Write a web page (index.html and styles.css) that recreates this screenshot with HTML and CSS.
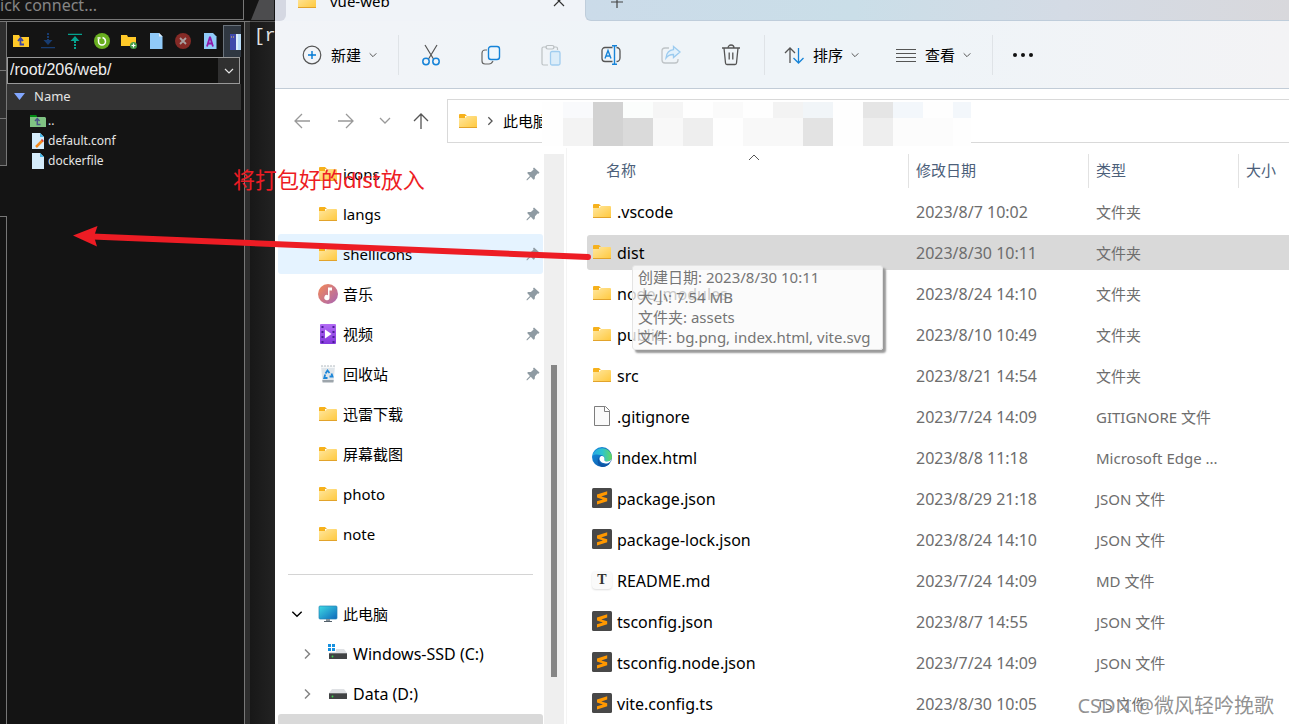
FILE: index.html
```html
<!DOCTYPE html>
<html lang="zh-CN">
<head>
<meta charset="utf-8">
<title>vue-web</title>
<link rel="stylesheet" href="styles.css">
</head>
<body>
<svg class="defs" aria-hidden="true">
  <defs>
    <linearGradient id="gFolder" x1="0" y1="0" x2="1" y2="1"><stop offset="0" stop-color="#ffe7a0"/><stop offset="1" stop-color="#ffc83c"/></linearGradient>
    <linearGradient id="gMusic" x1="0" y1="0" x2="1" y2="1"><stop offset="0" stop-color="#f58a55"/><stop offset="1" stop-color="#a765b5"/></linearGradient>
    <linearGradient id="gVideo" x1="0" y1="0" x2="0" y2="1"><stop offset="0" stop-color="#b36bf5"/><stop offset="1" stop-color="#8338dc"/></linearGradient>
    <linearGradient id="gPc" x1="0" y1="0" x2="1" y2="1"><stop offset="0" stop-color="#3fdbe4"/><stop offset="1" stop-color="#0d67bb"/></linearGradient>
    <linearGradient id="gEdgeTop" x1="0" y1="0" x2="1" y2="0"><stop offset="0" stop-color="#28a9e4"/><stop offset=".5" stop-color="#2dc3cf"/><stop offset="1" stop-color="#66d85c"/></linearGradient>
    <linearGradient id="gEdgeLow" x1="0" y1="0" x2="1" y2="1"><stop offset="0" stop-color="#1793e2"/><stop offset="1" stop-color="#0c4fa0"/></linearGradient>
  </defs>
  <symbol id="folder" viewBox="0 0 20 20"><path d="M1 4a1 1 0 0 1 1-1h5l2 2h-2v3H1z" fill="#f6b11c"/><path d="M1 7h6l2-2h9a1 1 0 0 1 1 1v11H1z" fill="url(#gFolder)"/><path d="M1 16h18v1H1z" fill="#e2a32b"/></symbol>
  <symbol id="pin" viewBox="0 0 14 14"><path d="M8 .5 13.500 5.500 12.500 6.800 11.500 6.500 9 9.300 8.700 12 7.500 12.700 4.800 9.800 1.300 13.300.5 13.300.7 12.200 3.900 8.900 1.200 6.100 2 4.900 4.900 4.900 7.600 2.500 7 1.400z" fill="#8f9ba3"/></symbol>
  <symbol id="music" viewBox="0 0 20 20"><circle cx="10" cy="10" r="10" fill="url(#gMusic)"/><path d="M10 3.500h4v3h-2.500v7A2.600 2.600 0 1 1 10 11.200z" fill="#fff"/></symbol>
  <symbol id="video" viewBox="0 0 20 20"><rect x="2" width="16" height="20" rx="1" fill="url(#gVideo)"/><path d="M4.500 2v17M15.500 2v17" stroke="#4a1d96" stroke-width="2" stroke-dasharray="2 3"/><path d="M7 5.500 13.500 10 7 14.500z" fill="#fff"/></symbol>
  <symbol id="bin" viewBox="0 0 20 20"><path d="M3 2h14l-1.500 16h-11z" fill="#dfe5ea"/><path d="M3 2h14l-.3 2H3.300z" fill="#f6f8f9"/><path d="M3 2h14" stroke="#b4bbc1" stroke-dasharray="2 1"/><path d="M4.300 16h11.400l-.3 2.500H4.600z" fill="#9da5ab"/><path d="m7.500 9.500 2-3 2 2.500M13.500 9.500l1 3h-3M9.500 14H6.200l1-3.500" fill="none" stroke="#1c86d8" stroke-width="1.800"/></symbol>
  <symbol id="pc" viewBox="0 0 20 20"><rect x="1" y="2" width="18" height="13" rx="1" fill="url(#gPc)" stroke="#2684b4" stroke-width=".7"/><path d="M8 15h4v2H8z" fill="#85919a"/><path d="M6 17h8v1H6z" fill="#53606a"/></symbol>
  <symbol id="drive" viewBox="0 0 20 20"><path d="M4 5h12l3 4H1z" fill="#dfe1e4"/><rect x="1" y="9" width="18" height="6" rx=".6" fill="#414344"/><path d="M1 9.500h18" stroke="#707274"/><circle cx="4.500" cy="12.500" r=".9" fill="#3ad84b"/></symbol>
  <symbol id="windrive" viewBox="0 0 20 20"><path d="M6 5h10l3 4H1z" fill="#dfe1e4"/><rect x="1" y="9" width="18" height="6" rx=".6" fill="#414344"/><path d="M1 9.500h18" stroke="#707274"/><circle cx="4.500" cy="12.500" r=".9" fill="#3ad84b"/><path d="M-1-1h9v9h-9z" fill="#fff"/><path d="M0 0h3v3H0zM4 0h3v3H4zM0 4h3v3H0zM4 4h3v3H4z" fill="#1590df"/></symbol>
  <symbol id="page" viewBox="0 0 20 20"><path d="M2.500.5h11l4 4v15h-15z" fill="#fafafa" stroke="#7d7d7d"/><path d="M12.500.5v5h5" fill="#fff" stroke="#7d7d7d"/></symbol>
  <symbol id="edge" viewBox="0 0 20 20"><circle cx="10" cy="10" r="10" fill="url(#gEdgeLow)"/><path d="M.3 9A10 10 0 0 1 20 10c.1 3-2.200 4.600-5 4.600-2 0-3-1-2.600-2.200.7-2-.6-4.200-3.400-4.500C5.500 7.400 2.500 6.900.3 9z" fill="url(#gEdgeTop)"/><path d="M7.500 9.500c-1.500 3-.3 6.300 2.500 7.500 2.800 1.200 6.500.5 8.500-1.500a10 10 0 0 1-8 4.500C6 19.500 4 13 7.500 9.500z" fill="#0c55a6"/><path d="M8.500 9.500c2-1.500 4.600.5 3.900 2.900-.4 1.400 1 2.200 2.600 2.200 1.800 0 3.600-.7 4.300-2-.4 1.800-1.400 2.800-2.800 3.300-4 1.500-8.700-.4-9-3.900 0-1 .3-2 1-2.500z" fill="#fff"/></symbol>
  <symbol id="sublime" viewBox="0 0 20 20"><rect width="20" height="20" rx="1.500" fill="#484848"/><path d="M15.200 3.300v3.200L9.300 8.400l5.900 1.800v3L5 16.500v-3.200l5.900-1.900L5 9.600V6.600z" fill="#ff9800"/></symbol>
  <symbol id="chev" viewBox="0 0 12 12"><path d="m2 4 4 4 4-4" fill="none" stroke="currentColor" stroke-width="1.200"/></symbol>
  <symbol id="chevr" viewBox="0 0 12 12"><path d="m4 1.500 4.500 4.500L4 10.500" fill="none" stroke="currentColor" stroke-width="1.500"/></symbol>
</svg>

<div class="desktop">
  <aside class="term">
    <div class="quick"><span class="quick-text">ick connect...</span></div>
    <div class="shell-tabs"><svg width="30" height="21" viewBox="0 0 30 21"><path d="M7 20 15 0h15v20z" fill="#4c4c4e"/></svg></div>
    <div class="rail"><i class="rail-a"></i><i class="rail-gap"></i><i class="rail-b"></i></div>
    <section class="sftp">
      <div class="sftp-tools">
        <button type="button" aria-label="上级目录"><svg width="16" height="16" viewBox="0 0 16 16"><path d="M0 2h6l1 2h9v10H0z" fill="#ffc928"/><path d="m5 8 2.500-3L10 8M7.500 6v5.500H11" fill="none" stroke="#3b45a5" stroke-width="1.800"/></svg></button>
        <button type="button" aria-label="下载"><svg width="16" height="16" viewBox="0 0 16 16"><path d="M8 0v8" stroke="#183c70" stroke-width="2" stroke-dasharray="2 1"/><path d="M3.500 7h9L8 12zM1 14h14v1.300H1z" fill="#183c70"/></svg></button>
        <button type="button" aria-label="上传"><svg width="16" height="16" viewBox="0 0 16 16"><path d="M1 .7h14V2H1zM3.500 8h9L8 3z" fill="#05a28f"/><path d="M8 8v8" stroke="#05a28f" stroke-width="2" stroke-dasharray="2 1"/></svg></button>
        <button type="button" aria-label="刷新"><svg width="16" height="16" viewBox="0 0 16 16"><circle cx="8" cy="8" r="8" fill="#69ae20"/><path d="M4.500 6v2.500a3.500 3.500 0 0 0 7 0C11.500 6 10 5 8.500 4.500M3.500 5h3" fill="none" stroke="#fff" stroke-width="1.500"/></svg></button>
        <button type="button" aria-label="新建文件夹"><svg width="16" height="16" viewBox="0 0 16 16"><path d="M0 2h6l1 2h8v9H0z" fill="#ffc928"/><circle cx="12.500" cy="12.500" r="3.500" fill="#459f4a"/><path d="M12.500 10.500v4M10.500 12.500h4" stroke="#fff" stroke-width="1.200"/></svg></button>
        <button type="button" aria-label="新建文件"><svg width="16" height="16" viewBox="0 0 16 16"><path d="M2 0h9l3.500 3.500V16H2z" fill="#90caf9"/><path d="M11 0v3.500h3.500z" fill="#e3f2fd"/></svg></button>
        <button type="button" aria-label="删除"><svg width="16" height="16" viewBox="0 0 16 16"><circle cx="8" cy="8" r="8" fill="#842a26"/><path d="m5 5 6 6m0-6-6 6" stroke="#a9a0a0" stroke-width="1.800"/></svg></button>
        <button type="button" aria-label="重命名"><svg width="16" height="16" viewBox="0 0 16 16"><path d="M2 0h9l3.500 3.500V16H2z" fill="#90caf9"/><path d="m5 13.500 2.800-9h.4l2.800 9M6 10.500h4" fill="none" stroke="#9019a8" stroke-width="1.800"/></svg></button>
        <button type="button" class="pressed" aria-label="分栏"><svg width="11" height="16" viewBox="0 0 11 16"><path d="M0 0h6v16H0z" fill="#3f49ab"/><path d="M6 0h5v16H6z" fill="#b9ddfb"/><path d="M7 0v16" stroke="#fff"/><path d="M1 3h4" stroke="#f0c95b" stroke-dasharray="1 1"/></svg></button>
      </div>
      <div class="path">
        <input type="text" value="/root/206/web/" aria-label="路径">
        <button type="button" aria-label="展开路径"><svg width="12" height="12"><use href="#chev"/></svg></button>
      </div>
      <div class="sftp-head"><svg width="11" height="7" viewBox="0 0 11 7"><path d="M0 0h11L5.500 7z" fill="#82a7ff"/></svg><span>Name</span></div>
      <ul class="sftp-list">
        <li><svg width="16" height="16" viewBox="0 0 16 16"><path d="M0 2h6l1 1v3H0z" fill="#008a12"/><path d="M0 4h15l1 1v9H0z" fill="#7fc383"/><path d="m5 8 2.300-2.500L9.600 8M7.300 6v5.500h3.200" fill="none" stroke="#4a5486" stroke-width="1.500"/></svg><span>..</span></li>
        <li><svg width="16" height="16" viewBox="0 0 16 16"><path d="M2 0h8l4 4v12H2z" fill="#d5ecfb"/><path d="M10 0v4h4z" fill="#48b9ea"/><path d="m6 14 6.500-6.500" stroke="#f58b1f" stroke-width="2.500"/><path d="m12 8 1-1" stroke="#d4373d" stroke-width="2.500"/></svg><span>default.conf</span></li>
        <li><svg width="16" height="16" viewBox="0 0 16 16"><path d="M2 0h8l4 4v12H2z" fill="#d5ecfb"/><path d="M10 0v4h4z" fill="#48b9ea"/></svg><span>dockerfile</span></li>
      </ul>
    </section>
    <div class="splitter"></div>
    <pre class="console">[r</pre>
  </aside>

  <main class="explorer">
    <header class="tabs">
      <div class="tab-left"></div>
      <div class="tab"><svg width="20" height="20"><use href="#folder"/></svg><span>vue-web</span>
        <button type="button" aria-label="关闭标签页"><svg width="12" height="12" viewBox="0 0 12 12"><path d="m1 1 10 10m0-10L1 11" stroke="#333" stroke-width="1.200"/></svg></button></div>
      <div class="tab-rest"><button type="button" aria-label="新建标签页"><svg width="12" height="12" viewBox="0 0 12 12"><path d="M6 0v12M0 6h12" stroke="#444" stroke-width="1.200"/></svg></button></div>
    </header>

    <div class="toolbar">
      <button type="button" class="cmd cmd-new"><svg width="20" height="20" viewBox="0 0 20 20"><circle cx="10" cy="10" r="8.800" fill="none" stroke="#555" stroke-width="1.200"/><path d="M10 6v8M6 10h8" stroke="#0078d4" stroke-width="1.400"/></svg><span>新建</span><svg class="caret" width="10" height="10"><use href="#chev"/></svg></button>
      <div class="tools">
        <button type="button" aria-label="剪切"><svg width="20" height="22" viewBox="0 0 20 22"><path d="m4 1 8.500 14M16 1 7.500 15" stroke="#555" stroke-width="1.200"/><circle cx="5" cy="17.500" r="3.200" fill="none" stroke="#1683d8" stroke-width="1.500"/><circle cx="15" cy="17.500" r="3.200" fill="none" stroke="#1683d8" stroke-width="1.500"/></svg></button>
        <button type="button" aria-label="复制"><svg width="20" height="20" viewBox="0 0 20 20"><path d="M6 5H4a3 3 0 0 0-3 3v8a3 3 0 0 0 3 3h4c2 0 3-1 4-3" fill="none" stroke="#666" stroke-width="1.200"/><rect x="7.500" y="1.500" width="11" height="13" rx="2.500" fill="#f0f6fb" stroke="#1683d8" stroke-width="1.400"/></svg></button>
        <button type="button" aria-label="粘贴" disabled><svg width="20" height="22" viewBox="0 0 20 22"><path d="M6 3H2.500A1.500 1.500 0 0 0 1 4.500v15A1.500 1.500 0 0 0 2.500 21H7M12 3h3a1.500 1.500 0 0 1 1.500 1.500V6" fill="none" stroke="#bcc1c4" stroke-width="1.200"/><rect x="5" y="1.500" width="8" height="3.500" rx="1.700" fill="none" stroke="#bcc1c4" stroke-width="1.200"/><rect x="9.500" y="7.500" width="9.500" height="13.500" rx="1.500" fill="#dcedf9" stroke="#a1cdef" stroke-width="1.300"/></svg></button>
        <button type="button" aria-label="重命名"><svg width="20" height="20" viewBox="0 0 20 20"><path d="M11.500 2.500H4a3 3 0 0 0-3 3v8a3 3 0 0 0 3 3h7.500M15.500 2.500A3.500 3.500 0 0 1 19 6v7a3.500 3.500 0 0 1-3.500 3.500" fill="none" stroke="#555" stroke-width="1.300"/><path d="m4 13.500 3-8 3 8M5 11h4M13.500.7v18.600M11 .7h5M11 19.300h5" fill="none" stroke="#1683d8" stroke-width="1.400"/></svg></button>
        <button type="button" aria-label="共享" disabled><svg width="20" height="20" viewBox="0 0 20 20"><path d="M8 3H4a3 3 0 0 0-3 3v9a3 3 0 0 0 3 3h10a3 3 0 0 0 3-3v-1" fill="none" stroke="#bfc4c7" stroke-width="1.300"/><path d="M12.500 1.500 19 7l-6.500 5.500V9.500c-3.500-.2-5.500 1-7.500 3.500.5-4.500 3-8 7.500-8.300z" fill="#e2f1fc" stroke="#9ccbef" stroke-width="1.300"/></svg></button>
        <button type="button" aria-label="删除"><svg width="20" height="22" viewBox="0 0 20 22"><path d="M1 4h18M7 4a3 3 0 0 1 6 0M3 4l1.500 15A1.600 1.600 0 0 0 6 20.500h8a1.600 1.600 0 0 0 1.500-1.500L17 4M8.200 8.500v7M11.800 8.500v7" fill="none" stroke="#555" stroke-width="1.300"/></svg></button>
      </div>
      <button type="button" class="cmd cmd-sort"><svg width="20" height="20" viewBox="0 0 20 20"><path d="M6 18V3M1 8l5-5 5 5" fill="none" stroke="#555" stroke-width="1.300"/><path d="M14.500 3v15M9.500 13l5 5 5-5" fill="none" stroke="#1683d8" stroke-width="1.300"/></svg><span>排序</span><svg class="caret" width="10" height="10"><use href="#chev"/></svg></button>
      <button type="button" class="cmd cmd-view"><svg width="20" height="20" viewBox="0 0 20 20"><path d="M0 4.500h20M0 8.500h20M0 12.500h20M0 16.500h20" stroke="#555"/></svg><span>查看</span><svg class="caret" width="10" height="10"><use href="#chev"/></svg></button>
      <button type="button" class="cmd cmd-more" aria-label="更多"><svg width="22" height="6" viewBox="0 0 22 6"><circle cx="3" cy="3" r="2" fill="#111"/><circle cx="11" cy="3" r="2" fill="#111"/><circle cx="19" cy="3" r="2" fill="#111"/></svg></button>
    </div>

    <nav class="navbar">
      <button type="button" class="nav-wide" aria-label="后退"><svg width="16" height="16" viewBox="0 0 16 16"><path d="M16 8H1m7-7L1 8l7 7" fill="none" stroke="#999" stroke-width="1.300"/></svg></button>
      <button type="button" class="nav-wide" aria-label="前进"><svg width="16" height="16" viewBox="0 0 16 16"><path d="M0 8h15M8 1l7 7-7 7" fill="none" stroke="#999" stroke-width="1.300"/></svg></button>
      <button type="button" class="nav-recent" aria-label="最近位置"><svg width="12" height="12" viewBox="0 0 12 12"><path d="m1 3 5 5 5-5" fill="none" stroke="#999" stroke-width="1.300"/></svg></button>
      <button type="button" class="nav-up" aria-label="上移"><svg width="16" height="16" viewBox="0 0 16 16"><path d="M8 16V1M1 8l7-7 7 7" fill="none" stroke="#555" stroke-width="1.300"/></svg></button>
      <div class="address">
        <svg width="20" height="20"><use href="#folder"/></svg><svg class="crumb" width="10" height="10" viewBox="0 0 12 12"><use href="#chevr"/></svg><span>此电脑</span>
        <svg class="mosaic" width="429" height="44" viewBox="0 0 429 44" shape-rendering="crispEdges">
          <path fill="#fefefe" d="M0 0h429v44H0z"/>
          <path fill="#f9fafc" d="M21 0h30v16H21z"/><path fill="#d2d2d2" d="M51 0h30v44H51z"/><path fill="#fbfdfc" d="M81 0h30v16H81z"/><path fill="#f5f5f5" d="M111 0h30v16h-30z"/><path fill="#fafafa" d="M171 0h30v16h-30z"/><path fill="#f3f3f3" d="M231 0h30v16h-30z"/><path fill="#f1f5f8" d="M261 0h30v16h-30z"/><path fill="#e5e5e5" d="M321 0h30v16h-30z"/><path fill="#f3f7fb" d="M351 0h30v16h-30zM411 0h18v16h-18z"/>
          <path fill="#f3f3f3" d="M21 16h30v28H21z"/><path fill="#dadada" d="M81 16h30v28H81z"/><path fill="#f8f8f8" d="M111 16h30v28h-30zM201 16h60v28h-60z"/><path fill="#eee" d="M141 16h30v28h-30zM321 16h30v28h-30z"/><path fill="#e3e3e3" d="M261 16h30v28h-30z"/><path fill="#fcfcfc" d="M351 16h60v28h-60z"/>
        </svg>
      </div>
    </nav>

    <div class="body">
      <nav class="side">
        <a href="#"><svg width="20" height="20"><use href="#folder"/></svg><span>icons</span><svg class="pin" width="14" height="14"><use href="#pin"/></svg></a>
        <a href="#"><svg width="20" height="20"><use href="#folder"/></svg><span>langs</span><svg class="pin" width="14" height="14"><use href="#pin"/></svg></a>
        <a href="#" class="hover"><svg width="20" height="20"><use href="#folder"/></svg><span>shellicons</span><svg class="pin" width="14" height="14"><use href="#pin"/></svg></a>
        <a href="#"><svg width="20" height="20"><use href="#music"/></svg><span>音乐</span><svg class="pin" width="14" height="14"><use href="#pin"/></svg></a>
        <a href="#"><svg width="20" height="20"><use href="#video"/></svg><span>视频</span><svg class="pin" width="14" height="14"><use href="#pin"/></svg></a>
        <a href="#"><svg width="20" height="20"><use href="#bin"/></svg><span>回收站</span><svg class="pin" width="14" height="14"><use href="#pin"/></svg></a>
        <a href="#"><svg width="20" height="20"><use href="#folder"/></svg><span>迅雷下载</span></a>
        <a href="#"><svg width="20" height="20"><use href="#folder"/></svg><span>屏幕截图</span></a>
        <a href="#"><svg width="20" height="20"><use href="#folder"/></svg><span>photo</span></a>
        <a href="#"><svg width="20" height="20"><use href="#folder"/></svg><span>note</span></a>
        <hr>
        <a href="#" class="root"><svg class="open" width="14" height="14"><use href="#chev"/></svg><svg width="20" height="20"><use href="#pc"/></svg><span>此电脑</span></a>
        <a href="#" class="drive"><svg class="shut" width="12" height="12"><use href="#chevr"/></svg><svg width="20" height="20"><use href="#windrive"/></svg><span>Windows-SSD (C:)</span></a>
        <a href="#" class="drive"><svg class="shut" width="12" height="12"><use href="#chevr"/></svg><svg width="20" height="20"><use href="#drive"/></svg><span>Data (D:)</span></a>
        <a href="#" class="selected" aria-label="网络"></a>
      </nav>
      <div class="scroll"><i></i></div>
      <section class="files">
        <table>
          <colgroup><col class="c-name"><col class="c-date"><col class="c-type"><col></colgroup>
          <thead><tr><th>名称<svg class="sorted" width="12" height="12" viewBox="0 0 12 12"><path d="m1 8 5-5 5 5" fill="none" stroke="#555"/></svg></th><th>修改日期</th><th>类型</th><th>大小</th></tr></thead>
          <tbody>
            <tr><td><div><svg width="20" height="20"><use href="#folder"/></svg>.vscode</div></td><td>2023/8/7 10:02</td><td>文件夹</td><td></td></tr>
            <tr class="selected"><td><div><svg width="20" height="20"><use href="#folder"/></svg>dist</div>
              <div class="tip" role="tooltip">创建日期: 2023/8/30 10:11<br>大小: 7.54 MB<br>文件夹: assets<br>文件: bg.png, index.html, vite.svg</div></td><td>2023/8/30 10:11</td><td>文件夹</td><td></td></tr>
            <tr><td><div><svg width="20" height="20"><use href="#folder"/></svg>node_modules</div></td><td>2023/8/24 14:10</td><td>文件夹</td><td></td></tr>
            <tr><td><div><svg width="20" height="20"><use href="#folder"/></svg>public</div></td><td>2023/8/10 10:49</td><td>文件夹</td><td></td></tr>
            <tr><td><div><svg width="20" height="20"><use href="#folder"/></svg>src</div></td><td>2023/8/21 14:54</td><td>文件夹</td><td></td></tr>
            <tr><td><div><svg width="20" height="20"><use href="#page"/></svg>.gitignore</div></td><td>2023/7/24 14:09</td><td>GITIGNORE 文件</td><td></td></tr>
            <tr><td><div><svg width="20" height="20"><use href="#edge"/></svg>index.html</div></td><td>2023/8/8 11:18</td><td>Microsoft Edge ...</td><td></td></tr>
            <tr><td><div><svg width="20" height="20"><use href="#sublime"/></svg>package.json</div></td><td>2023/8/29 21:18</td><td>JSON 文件</td><td></td></tr>
            <tr><td><div><svg width="20" height="20"><use href="#sublime"/></svg>package-lock.json</div></td><td>2023/8/24 14:10</td><td>JSON 文件</td><td></td></tr>
            <tr><td><div><span class="md">T</span>README.md</div></td><td>2023/7/24 14:09</td><td>MD 文件</td><td></td></tr>
            <tr><td><div><svg width="20" height="20"><use href="#sublime"/></svg>tsconfig.json</div></td><td>2023/8/7 14:55</td><td>JSON 文件</td><td></td></tr>
            <tr><td><div><svg width="20" height="20"><use href="#sublime"/></svg>tsconfig.node.json</div></td><td>2023/7/24 14:09</td><td>JSON 文件</td><td></td></tr>
            <tr><td><div><svg width="20" height="20"><use href="#sublime"/></svg>vite.config.ts</div></td><td>2023/8/30 10:05</td><td>TS 文件</td><td></td></tr>
          </tbody>
        </table>
      </section>
    </div>
  </main>
</div>

<svg class="arrow" width="600" height="270" viewBox="0 0 600 270" aria-hidden="true"><path d="M92 236.500 588 257" stroke="#ed1c24" stroke-width="6" stroke-linecap="round"/><path d="M73 235.500 97.500 226 94 236.500 97 246.500z" fill="#ed1c24"/></svg>
<p class="note">将打包好的dist放入</p>
<p class="mark">CSDN @微风轻吟挽歌</p>
</body>
</html>
```
FILE: styles.css
```css
* { box-sizing: border-box; }

body {
  position: relative;
  margin: 0;
  height: 100vh;
  overflow: hidden;
  background: #fff;
  color: #000;
  font: 15px/20px "Noto Sans", "Noto Sans CJK SC", sans-serif;
}

button {
  display: flex;
  align-items: center;
  justify-content: center;
  padding: 0;
  border: 0;
  background: none;
  color: inherit;
  font: inherit;
}

svg { display: block; flex: none; }
p { margin: 0; }
.defs { position: absolute; width: 0; height: 0; }

.desktop { display: flex; height: 100%; }

/* terminal client */
.term {
  display: grid;
  flex: none;
  width: 275px;
  grid-template: 21px 1fr / 7px 1fr 6px 25px;
  background: #141414;
  color: #e4e4e4;
}

.quick {
  display: flex;
  grid-column: 1 / 3;
  align-items: flex-end;
  height: 20px;
  border: solid #777;
  border-width: 0 1px 1px 0;
  overflow: hidden;
}

.quick-text { padding-bottom: 2px; color: #858585; font-size: 16px; line-height: 24px; white-space: nowrap; }
.shell-tabs { grid-column: 3 / 5; overflow: hidden; }
.rail { display: flex; flex-direction: column; }
.rail-a {
  height: 145px;
  border: 1px solid #777;
  border-left: 0;
  background: linear-gradient(#777, #777) 0 48px / 100% 1px no-repeat, linear-gradient(#777, #777) 0 96px / 100% 1px no-repeat, #2e2e2e;
}
.rail-gap { height: 50px; }
.rail-b { flex: 1; border: solid #777; border-width: 1px 1px 0 0; }

.sftp { border-top: 1px solid #777; padding-right: 3px; }
.sftp-tools { display: flex; align-items: center; height: 35px; padding-top: 3px; }
.sftp-tools button { width: 27px; height: 32px; }
.sftp-tools .pressed {
  width: 18px;
  justify-content: flex-end;
  border: solid #6a737c;
  border-width: 1px 0 0 1px;
  background: #303842;
}

.path { display: flex; height: 27px; margin-right: 1px; border: 1px solid #999; }
.path input {
  flex: 1;
  min-width: 0;
  padding: 0 0 2px 2px;
  border: 0;
  background: #10100f;
  color: #eee;
  font: 16px/20px "Liberation Sans", sans-serif;
}
.path button { width: 21px; background: #303030; }

.sftp-head { display: flex; align-items: center; gap: 9px; height: 26px; padding: 0 0 2px 7px; background: #333; font-size: 13px; }
.sftp-list { margin: 0; padding: 1px 0 0 23px; list-style: none; font-size: 12px; }
.sftp-list li { display: flex; align-items: center; gap: 2px; height: 20px; }

.splitter { border: solid #777; border-width: 1px 0 0 1px; background: #2e2e2e; }
.console {
  margin: 0;
  padding: 4px 0 0 4px;
  border-top: 1px solid #555;
  background: linear-gradient(90deg, #181818, #222);
  font: 18px/20px "Liberation Mono", monospace;
  overflow: hidden;
}

/* explorer window */
.explorer { display: flex; flex: 1; flex-direction: column; min-width: 0; }

.tabs { display: flex; flex: none; height: 21px; overflow: hidden; background: #f0f3f8; }
.tab-left { width: 11px; border-radius: 0 0 6px; background: #d5d8e2; }
.tab { display: flex; align-items: center; align-self: flex-end; width: 299px; height: 40px; padding: 0 20px 0 11px; }
.tab span { flex: 1; padding-left: 13px; }
.tab-rest {
  display: flex;
  flex: 1;
  align-items: flex-end;
  padding: 0 0 12px 25px;
  border: solid #bfcddb;
  border-width: 0 0 1px 1px;
  border-radius: 0 0 0 6px;
  background: linear-gradient(90deg, #cbdbe9, #cadee8 38%, #d4dbe5 68%, #d8d8dc);
}

.toolbar {
  display: flex;
  flex: none;
  align-items: center;
  height: 68px;
  border-bottom: 1px solid #c2ccd7;
  background: linear-gradient(90deg, #f2f4f8, #eff4f8 35%, #eff4f8 65%, #f3f3f5);
}
.cmd { justify-content: flex-start; gap: 9px; height: 40px; }
.caret { margin-left: -2px; color: #555; }
.cmd-new { width: 124px; padding-left: 27px; border-right: 1px solid #dfe3e7; }
.tools { display: flex; width: 366px; padding-left: 2px; border-right: 1px solid #dfe3e7; }
.tools button { width: 60px; height: 40px; }
.cmd-sort { width: 112px; padding-left: 19px; }
.cmd-view { width: 116px; padding-left: 19px; border-right: 1px solid #dfe3e7; }
.cmd-more { padding-left: 19px; }

.navbar { display: flex; flex: none; align-items: center; height: 59px; padding: 10px 0 5px 5px; }
.nav-wide { width: 44px; height: 40px; }
.nav-recent { width: 34px; height: 40px; }
.nav-up { width: 38px; height: 40px; }
.address {
  display: flex;
  position: relative;
  flex: 1;
  align-items: center;
  height: 44px;
  margin-left: 7px;
  padding-left: 10px;
  border: 1px solid #d9d9d9;
  border-right: 0;
}
.crumb { margin: 0 8px 0 7px; color: #555; }
.mosaic { position: absolute; left: 94px; top: 2px; }

.body { display: flex; flex: 1; min-height: 0; }
.side { flex: none; width: 269px; padding: 6px 1px 0 3px; overflow: hidden; }
.side a {
  display: flex;
  align-items: center;
  gap: 5px;
  height: 40px;
  padding: 0 3px 0 40px;
  border-radius: 3px;
  color: #000;
  text-decoration: none;
}
.side .hover { background: #e5f3ff; }
.side .selected { background: #d9d9d9; }
.side .pin { margin-left: auto; }
.side hr { margin: 20px 10px 19px; border: 0; border-top: 1px solid #d4d4d4; }
.side .root { padding-left: 12px; }
.side .drive { padding-left: 23px; font-size: 16px; }
.open { margin-right: 9px; }
.shut { margin-right: 10px; color: #858585; }

.scroll {
  display: grid;
  flex: none;
  grid-template-rows: 211fr 312fr 47fr;
  justify-content: center;
  width: 20px;
  margin-top: 6px;
  background: #efefef;
}
.scroll i { grid-row: 2; width: 6px; background: #868686; }

.files { flex: 1; min-width: 0; margin-left: 2px; padding-left: 20px; border-left: 1px solid #f4f4f4; }
table { width: 100%; border-spacing: 0 6px; table-layout: fixed; }
.c-name { width: 321px; }
.c-date { width: 180px; }
.c-type { width: 150px; }
th { position: relative; height: 34px; padding: 0 0 2px 7px; border-left: 1px solid #e2e2e2; color: #4c607a; font-weight: 400; text-align: left; white-space: nowrap; }
th:first-child { padding-left: 19px; border: 0; }
.sorted { position: absolute; left: 50%; top: -2px; }
td { height: 35px; padding: 0 0 0 8px; color: #6d6d6d; white-space: nowrap; }
td:first-child { position: relative; padding-left: 5px; border-radius: 3px 0 0 3px; color: #000; }
td:first-child, td:nth-child(2) { font-size: 16px; }
td > div:first-child { display: flex; align-items: center; gap: 5px; }
td svg { margin-bottom: 2px; }
.files .selected td { background: #d9d9d9; }

.md {
  width: 20px;
  margin-bottom: 2px;
  border-radius: 4px;
  background: #fafafa;
  box-shadow: 0 1px 2px #ddd;
  color: #333;
  font: bold 14px/18px "Liberation Serif", serif;
  text-align: center;
}

.tip {
  position: absolute;
  z-index: 1;
  left: 45px;
  top: 30px;
  padding: 1px 12px 2px 5px;
  border: 1px solid #e4e4e4;
  border-radius: 3px;
  background: rgba(250, 250, 250, .8);
  box-shadow: 3px 3px 2px #999;
  color: #757575;
  font-size: 15px;
}

/* annotations laid over both windows */
.arrow { position: absolute; z-index: 2; left: 0; top: 0; }
.note { position: absolute; z-index: 2; left: 233px; top: 165px; color: #ed1c24; font-size: 22px; line-height: 28px; }
.mark { position: absolute; z-index: 2; right: 15px; bottom: 4px; color: rgba(110, 110, 110, .75); font-size: 20px; line-height: 28px; text-shadow: 1px 1px 1px #fff; }
```
